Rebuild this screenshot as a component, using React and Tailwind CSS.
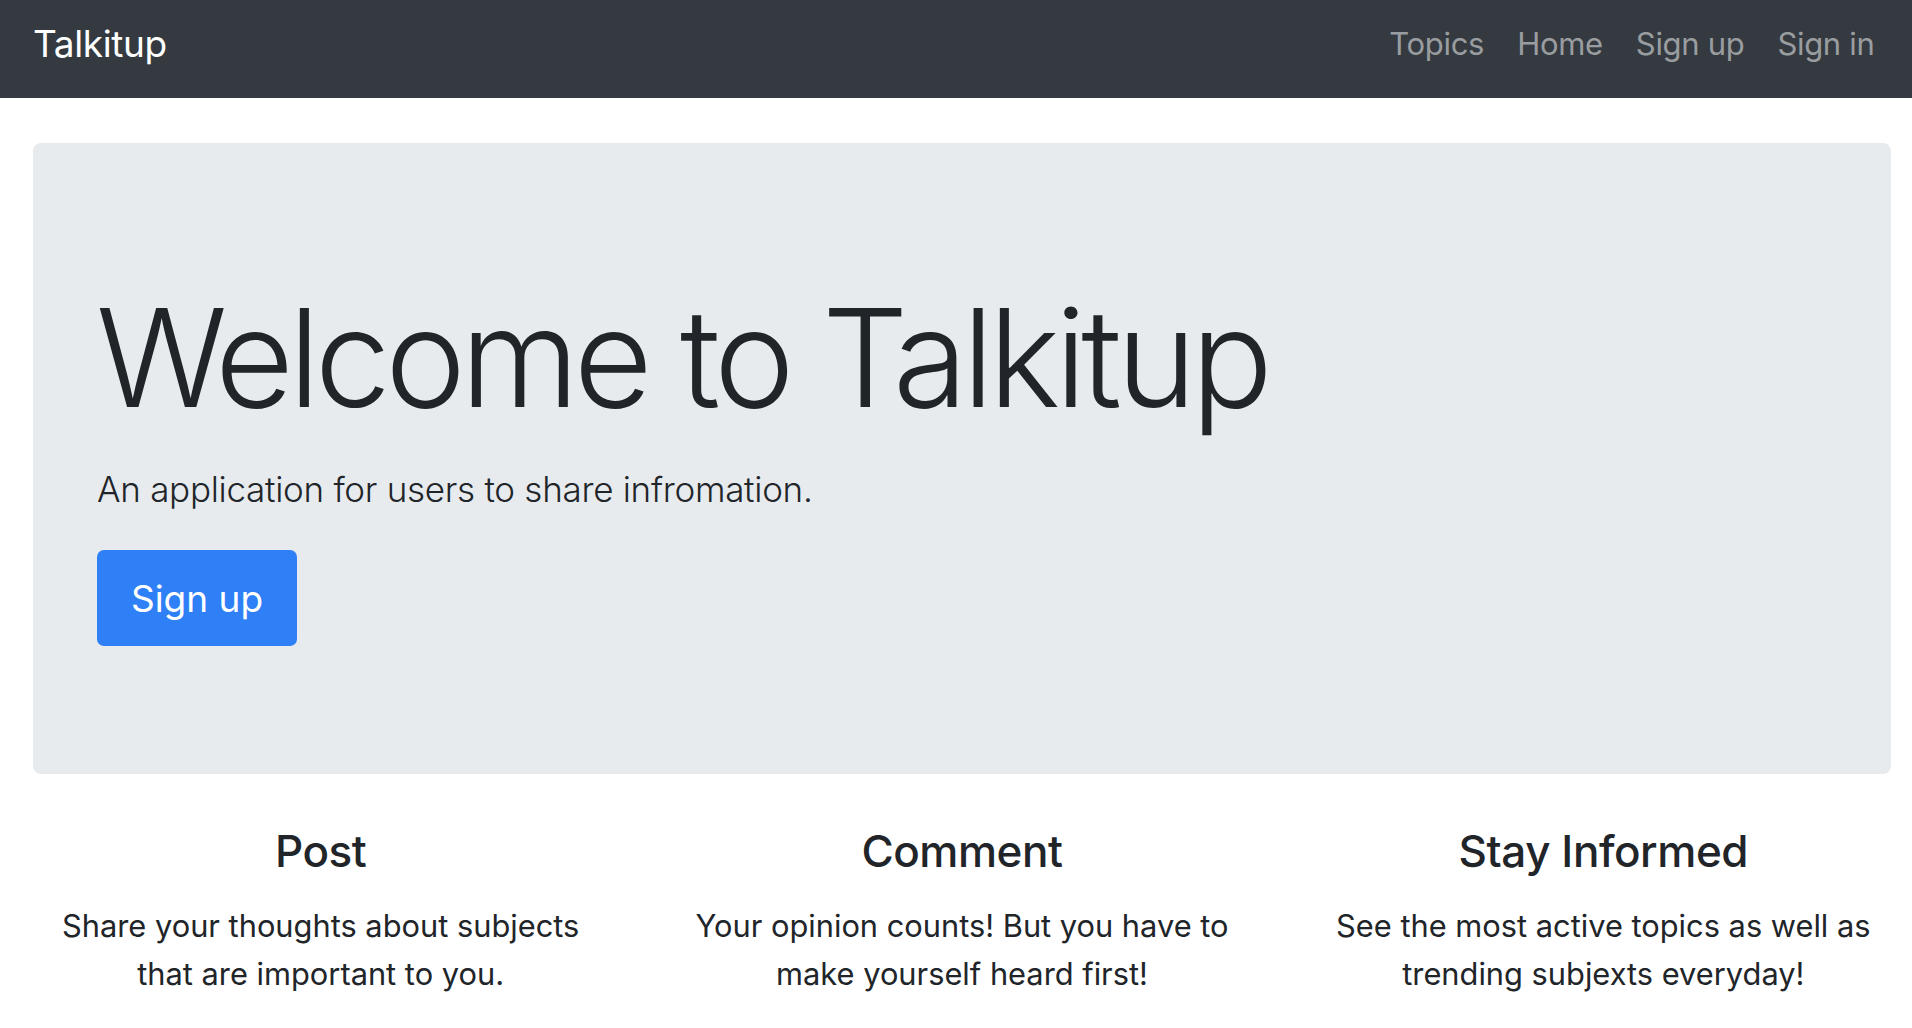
import React from "react";

const features = [
  {
    title: "Post",
    lines: ["Share your thoughts about subjects", "that are important to you."],
  },
  {
    title: "Comment",
    lines: ["Your opinion counts! But you have to", "make yourself heard first!"],
  },
  {
    title: "Stay Informed",
    lines: ["See the most active topics as well as", "trending subjexts everyday!"],
  },
];

export default function App() {
  return (
    <div className="min-h-screen w-full overflow-x-hidden bg-white font-['Inter','Noto_Sans',sans-serif] text-[#212529]">
      <div className="w-[1924px]">
        <nav className="flex h-[98px] items-center justify-between bg-[#343a40] px-[33px] pb-[12px]">
          <a className="text-[37px] leading-none text-white tracking-[-0.01em]">Talkitup</a>
          <ul className="flex items-center">
            {["Topics", "Home", "Sign up", "Sign in"].map((l) => (
              <li key={l}>
                <a className="block px-[16.5px] text-[31px] leading-none text-[#9a9da0] tracking-[-0.01em]">
                  {l}
                </a>
              </li>
            ))}
          </ul>
        </nav>

        <section className="mx-[33px] mt-[45px] h-[631px] rounded-[8px] bg-[#e8ebee] pl-[63px] pt-[147px]">
          <h1 className="text-[136px] font-light leading-none tracking-[-0.04em]">Welcome to Talkitup</h1>
          <p className="mt-[46px] pl-[1px] text-[35px] font-light leading-none tracking-[-0.008em]">
            An application for users to share infromation.
          </p>
          <button className="ml-[1px] mt-[43px] flex h-[96px] w-[200px] items-center justify-center rounded-[7px] bg-[#2f7ff6] text-[37px] leading-none text-white">
            Sign up
          </button>
        </section>

        <div className="mt-[55px] grid grid-cols-3">
          {features.map((f) => (
            <div key={f.title} className="flex flex-col items-center text-center">
              <h3 className="text-[44px] font-medium leading-none tracking-[-0.01em]">{f.title}</h3>
              <p className="mt-[29px] text-[30.8px] leading-[48px]">
                {f.lines[0]}
                <br />
                {f.lines[1]}
              </p>
            </div>
          ))}
        </div>
      </div>
    </div>
  );
}
